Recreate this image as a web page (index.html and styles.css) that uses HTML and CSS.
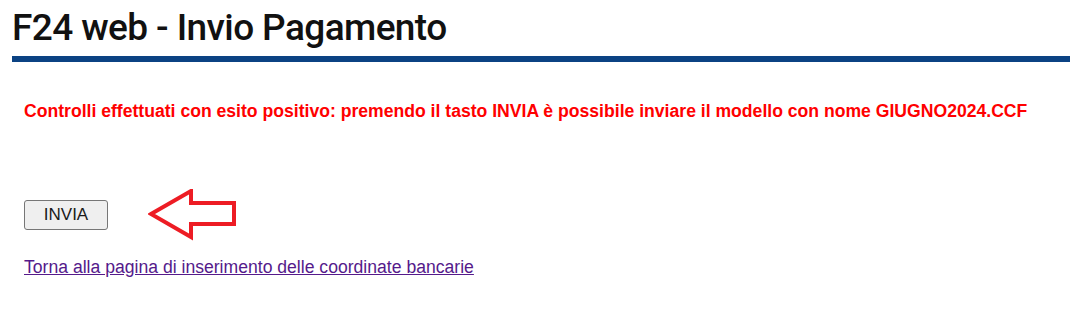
FILE: index.html
```html
<!DOCTYPE html>
<html lang="it">
<head>
<meta charset="utf-8">
<title>F24 web - Invio Pagamento</title>
<link rel="stylesheet" href="styles.css">
</head>
<body>
<div class="page">
  <header class="header">
    <h1 class="title">F24 web - Invio Pagamento</h1>
  </header>
  <main class="content">
    <p class="message">Controlli effettuati con esito positivo: premendo il tasto INVIA è possibile inviare il modello con nome GIUGNO2024.CCF</p>
    <div class="action-row">
      <button class="btn" type="button">INVIA</button>
      <svg class="arrow" width="90" height="52" viewBox="0 0 90 52" aria-hidden="true">
        <polygon points="3,25 43,2 43,14 86,14 86,35 43,35 43,48" fill="none" stroke="#ed1c24" stroke-width="4" stroke-linejoin="miter"/>
      </svg>
    </div>
    <a class="back-link" href="#">Torna alla pagina di inserimento delle coordinate bancarie</a>
  </main>
</div>
</body>
</html>
```
FILE: styles.css
```css
html, body {
  margin: 0;
  padding: 0;
  background: #ffffff;
}
.page {
  padding-left: 12px;
}
.header {
  border-bottom: 6px solid #0b4283;
  height: 56px;
}
.title {
  margin: 0;
  padding-top: 5px;
  font-family: Roboto, "Open Sans", sans-serif;
  font-weight: 500;
  font-size: 37px;
  line-height: 46px;
  color: #111111;
  letter-spacing: -0.6px;
}
.content {
  padding-left: 12px;
  font-family: "Liberation Sans", Arial, sans-serif;
}
.message {
  margin: 0;
  padding-top: 39px;
  font-size: 17.6px;
  font-weight: bold;
  line-height: 20px;
  color: #ff0000;
}
.action-row {
  display: flex;
  align-items: center;
  gap: 40px;
  margin-top: 68px;
}
.btn {
  font-family: "Liberation Sans", Arial, sans-serif;
  font-size: 17px;
  color: #1a1a1a;
  background: #efefef;
  border: 1px solid #767676;
  border-radius: 3px;
  width: 84px;
  height: 30px;
  padding: 0;
}
.arrow {
  display: block;
}
.back-link {
  display: inline-block;
  margin-top: 16px;
  font-size: 17.6px;
  line-height: 20px;
  color: #551a8b;
}
```
